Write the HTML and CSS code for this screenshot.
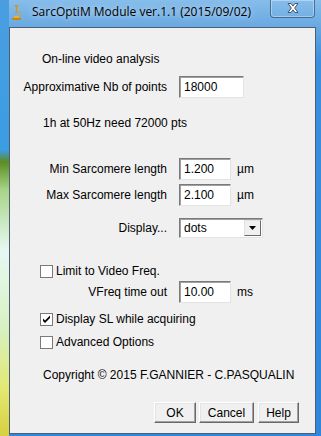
FILE: index.html
```html
<!DOCTYPE html>
<html lang="en">
<head>
    <meta charset="UTF-8">
    <title>SarcOptiM Module ver.1.1 (2015/09/02)</title>
    <link rel="stylesheet" href="styles.css">
</head>
<body>

    <div class="window">
        <div class="titlebar">
            <svg class="app-icon" width="9" height="15" viewBox="0 0 9 15">
                <path d="M3 0h3v2H5v5h1v1H3V7h1V2H3z" fill="#d99412"/>
                <path d="M6 5c2 1 2.5 4 1 6H4v1h3.5c1-1 1.5-3 1.2-4.5C8.5 6 7.5 5 6 5z" fill="#e0a21c"/>
                <path d="M0 13h9v2H0z" fill="#c9860e"/>
                <path d="M2 11h5v2H2z" fill="#e8b030"/>
            </svg>
            <span class="title">SarcOptiM Module ver.1.1 (2015/09/02)</span>
            <div class="close-btn">
                <svg width="12" height="10" viewBox="0 0 12 10">
                    <path d="M1 0.5h3l2 2.6 2-2.6h3L7.6 5 11 9.5H8L6 6.9 4 9.5H1L4.4 5z" fill="#fff" stroke="#3a4a5c" stroke-width="0.9"/>
                </svg>
            </div>
        </div>

        <div class="client">
            <p class="note">On-line video analysis</p>

            <div class="row row-points">
                <span class="lbl">Approximative Nb of points</span>
                <div class="field field-wide">18000</div>
            </div>

            <p class="info">1h at 50Hz need 72000 pts</p>

            <div class="row row-min">
                <span class="lbl">Min Sarcomere length</span>
                <div class="field">1.200</div>
                <span class="unit">µm</span>
            </div>

            <div class="row row-max">
                <span class="lbl">Max Sarcomere length</span>
                <div class="field">2.100</div>
                <span class="unit">µm</span>
            </div>

            <div class="row row-display">
                <span class="lbl">Display...</span>
                <div class="select">
                    <span class="select-value">dots</span>
                    <span class="select-arrow">
                        <svg width="7" height="4" viewBox="0 0 7 4"><path d="M0 0h7L3.5 4z" fill="#000"/></svg>
                    </span>
                </div>
            </div>

            <div class="check check-limit">
                <span class="box"></span>
                <span>Limit to Video Freq.</span>
            </div>

            <div class="row row-vfreq">
                <span class="lbl">VFreq time out</span>
                <div class="field">10.00</div>
                <span class="unit">ms</span>
            </div>

            <div class="check check-display">
                <span class="box">
                    <svg width="11" height="11" viewBox="0 0 11 11"><path d="M2 4.5l2 2 5-5v2.5L4 9 2 7z" fill="#000"/></svg>
                </span>
                <span>Display SL while acquiring</span>
            </div>

            <div class="check check-advanced">
                <span class="box"></span>
                <span>Advanced Options</span>
            </div>

            <p class="copyright">Copyright © 2015 F.GANNIER - C.PASQUALIN</p>

            <div class="buttons">
                <button class="btn btn-ok">OK</button>
                <button class="btn btn-cancel">Cancel</button>
                <button class="btn btn-help">Help</button>
            </div>
        </div>
    </div>

</body>
</html>
```

FILE: styles.css
```css
/* Window frame */
body {
    margin: 0;
    padding: 0;
    background-color: #2e87dd;
}

.window {
    width: 321px;
    height: 436px;
    display: flex;
    flex-direction: column;
    overflow: hidden;
    /* left strip shows the wallpaper through the glass */
    background:
        linear-gradient(to bottom, #4a9ee0 0, #3b9de3 150px, #5c8c22 162px, #a8d488 190px, #e6f8f2 250px, #d8f0c0 330px, #e2e870 390px, #d8d040 436px) left top / 9px 100% no-repeat,
        linear-gradient(to bottom, #86bdea 0, #6aa9e2 26px, #3b8fdf 60px, #2e87dd 436px);
}

.titlebar {
    height: 27px;
    flex-shrink: 0;
    display: flex;
    align-items: flex-start;
    padding-left: 12px;
    font-family: "Open Sans", "Noto Sans", sans-serif;
    font-size: 12px;
    color: #000;
}

.app-icon {
    margin-top: 5px;
    margin-right: 11px;
}

.title {
    margin-top: 3px;
    text-shadow: 0 0 6px rgba(255, 255, 255, 0.8);
}

.close-btn {
    margin-left: auto;
    margin-right: 6px;
    width: 45px;
    height: 18px;
    box-sizing: border-box;
    border: 1px solid rgba(30, 50, 80, 0.55);
    border-top: none;
    border-radius: 0 0 4px 4px;
    box-shadow: inset 0 0 0 1px rgba(255, 255, 255, 0.35);
    display: flex;
    align-items: center;
    justify-content: center;
    padding-bottom: 2px;
}

/* Client area */
.client {
    flex: 1;
    margin: 0 5px 2px 9px;
    border: 1px solid #4d5f70;
    background-color: #f0f0f0;
    font-family: "Liberation Sans", Arial, sans-serif;
    font-size: 12px;
    color: #000;
}

p {
    margin: 0;
    line-height: 14px;
}

.note {
    margin-top: 24px;
    padding-left: 32px;
}

.info {
    margin-top: 18px;
    padding-left: 33px;
}

.copyright {
    margin-top: 19px;
    padding-left: 33px;
}

/* Label + field rows */
.row {
    display: flex;
    align-items: center;
    height: 22px;
}

.lbl {
    width: 157px;
    margin-right: 12px;
    text-align: right;
}

.row-points { margin-top: 10px; }
.row-min { margin-top: 28px; }
.row-max { margin-top: 4px; }
.row-display { margin-top: 12px; height: 20px; }
.row-vfreq { margin-top: 3px; }

.field {
    width: 52px;
    height: 22px;
    box-sizing: border-box;
    padding: 0 4px;
    line-height: 20px;
    background-color: #fff;
    border: 1px solid;
    border-color: #7a7a7a #e3e3e3 #e3e3e3 #7a7a7a;
    box-shadow: inset 1px 1px 0 #a0a0a0;
}

.field-wide {
    width: 65px;
}

.unit {
    margin-left: 6px;
}

/* Dropdown */
.select {
    width: 84px;
    height: 20px;
    box-sizing: border-box;
    display: flex;
    align-items: center;
    background-color: #fff;
    border: 1px solid;
    border-color: #7a7a7a #e3e3e3 #e3e3e3 #7a7a7a;
    box-shadow: inset 1px 1px 0 #a0a0a0;
}

.select-value {
    flex: 1;
    padding-left: 4px;
}

.select-arrow {
    width: 17px;
    height: 16px;
    margin-right: 1px;
    box-sizing: border-box;
    display: flex;
    align-items: center;
    justify-content: center;
    background-color: #f0f0f0;
    border: 1px solid;
    border-color: #e3e3e3 #696969 #696969 #e3e3e3;
}

/* Checkboxes */
.check {
    display: flex;
    align-items: center;
    height: 14px;
    padding-left: 30px;
}

.check-limit { margin-top: 26px; }
.check-display { margin-top: 9px; }
.check-advanced { margin-top: 9px; }

.box {
    width: 13px;
    height: 13px;
    box-sizing: border-box;
    margin-right: 3px;
    background-color: #fff;
    border: 1px solid #7a7a7a;
    display: flex;
    align-items: center;
    justify-content: center;
}

/* Buttons */
.buttons {
    display: flex;
    justify-content: flex-end;
    margin-top: 20px;
    padding-right: 16px;
}

.btn {
    height: 21px;
    padding: 0;
    font-family: "Liberation Sans", Arial, sans-serif;
    font-size: 12px;
    color: #000;
    background-color: #f0f0f0;
    border: 1px solid;
    border-color: #fff #696969 #696969 #fff;
    box-shadow: inset -1px -1px 0 #a0a0a0, inset 1px 1px 0 #e3e3e3;
}

.btn-ok { width: 42px; }
.btn-cancel { width: 55px; margin-left: 3px; }
.btn-help { width: 41px; margin-left: 4px; }
```
